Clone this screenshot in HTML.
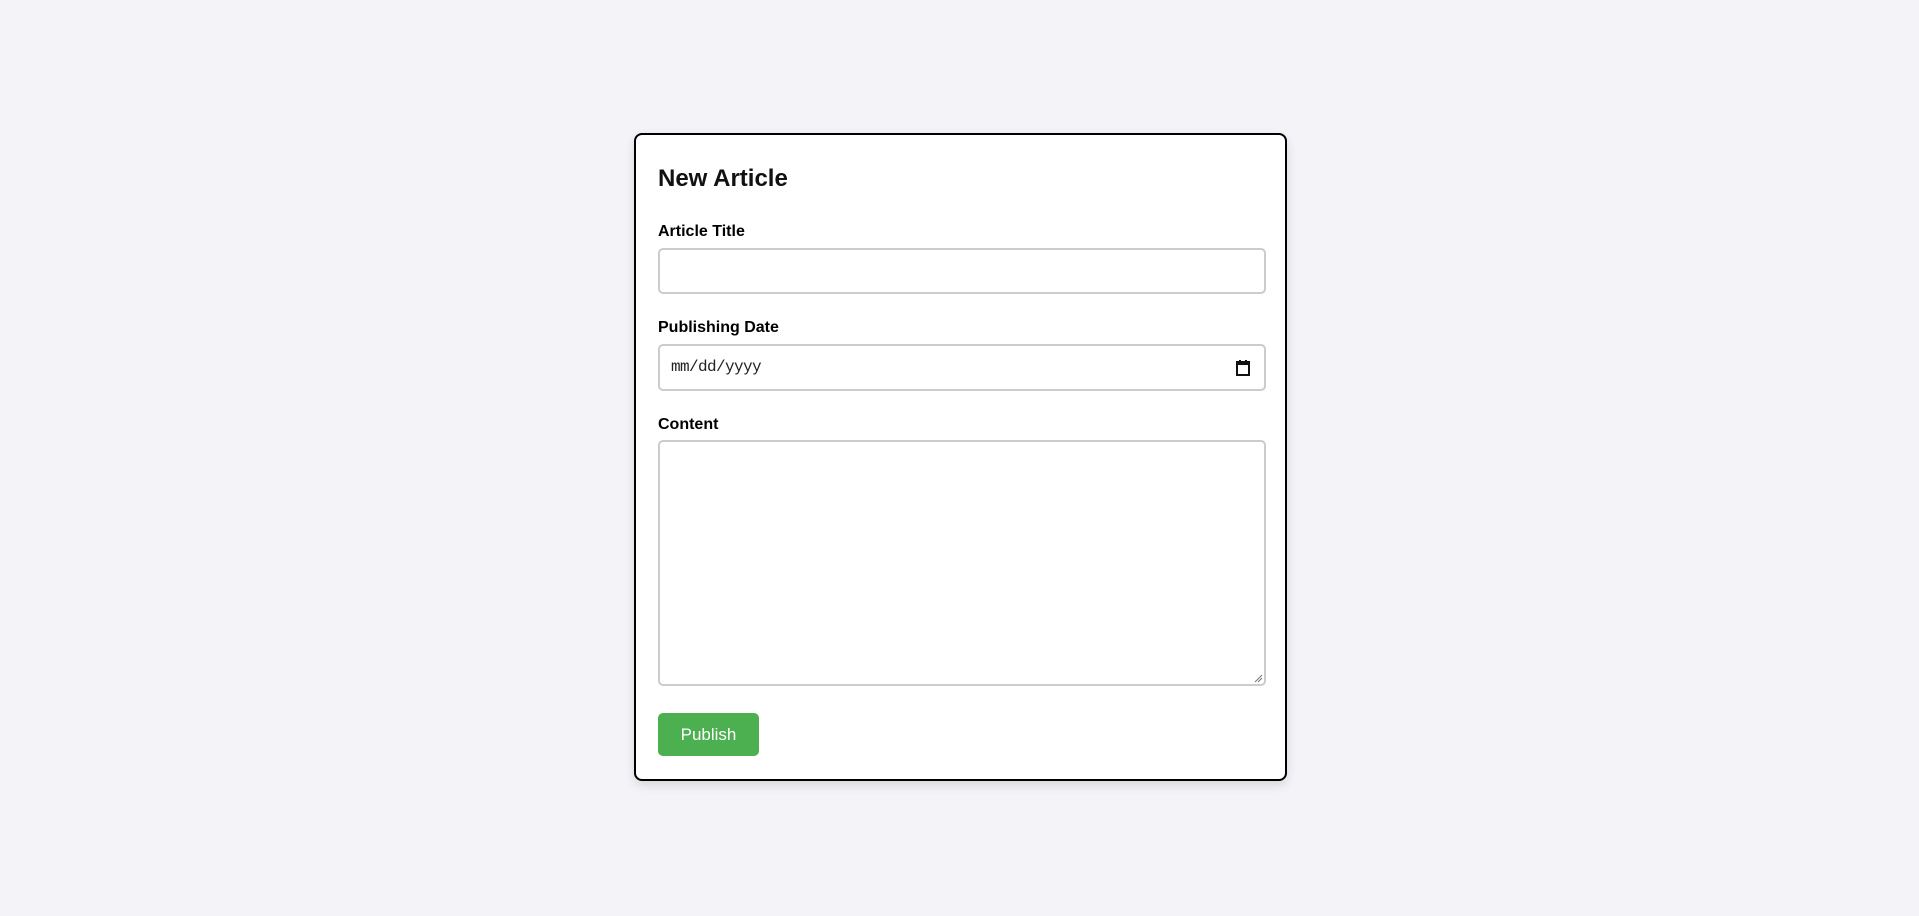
<!DOCTYPE html>
<html><head><style>
*{box-sizing:border-box}
body{margin:0;width:1919px;height:916px;background:#f4f4f8;font-family:"Liberation Sans",Arial,sans-serif;position:relative}
.card{position:absolute;left:634px;top:133px;width:653px;height:648px;background:#fff;border:2px solid #000;border-radius:8px;box-shadow:0 4px 10px rgba(0,0,0,0.12)}
h2{position:absolute;left:22px;top:30px;margin:0;font-size:24px;font-weight:bold;color:#111}
label{position:absolute;left:22px;font-size:16px;font-weight:bold;color:#000}
.in{position:absolute;left:22px;width:608px;border:2px solid #ccc;border-radius:5px;background:#fff}
.btn{position:absolute;left:22px;top:578px;width:101px;height:43px;background:#4caf50;border-radius:5px;color:#fff;font-size:17px;text-align:center;line-height:43px}
</style></head><body>
<div class="card">
<h2>New Article</h2>
<label style="top:88px">Article Title</label>
<div class="in" style="top:113px;height:46px"></div>
<label style="top:184px">Publishing Date</label>
<div class="in" style="top:209px;height:47px">
<span style="position:absolute;left:11px;top:12px;font-family:'Liberation Mono',monospace;font-size:16px;letter-spacing:-0.6px;color:#222">mm/dd/yyyy</span>
<svg style="position:absolute;right:14px;top:14px" width="14" height="16" viewBox="0 0 14 16"><rect x="1" y="2" width="12" height="13" fill="none" stroke="#111" stroke-width="2"/><rect x="1" y="2" width="12" height="3" fill="#111"/><rect x="3" y="0" width="2" height="3" fill="#111"/><rect x="9" y="0" width="2" height="3" fill="#111"/></svg>
</div>
<label style="top:281px">Content</label>
<div class="in" style="top:305px;height:246px">
<svg style="position:absolute;right:1px;bottom:1px" width="9" height="9"><path d="M1 8L8 1M4 8L8 4" stroke="#777" stroke-width="1"/></svg>
</div>
<div class="btn">Publish</div>
</div>
</body></html>
